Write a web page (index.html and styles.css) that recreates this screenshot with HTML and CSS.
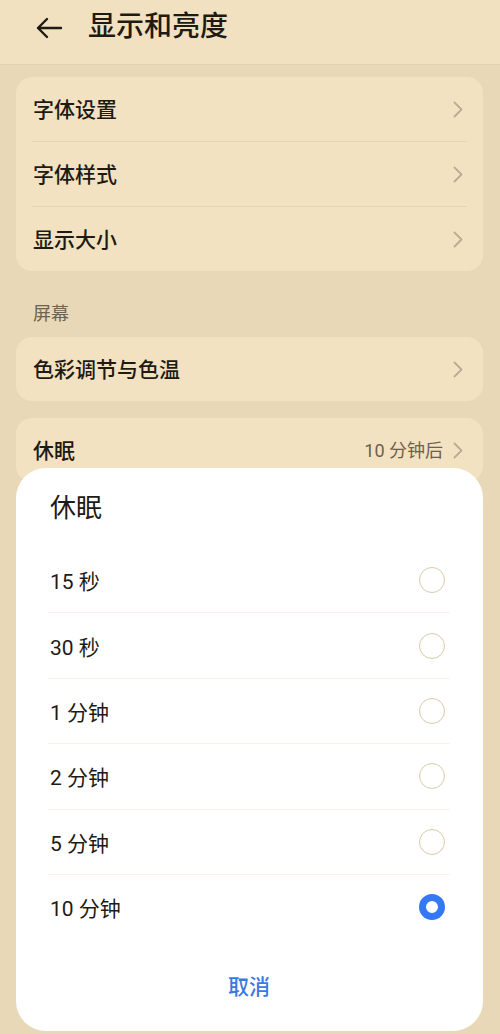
FILE: index.html
```html
<!DOCTYPE html>
<html lang="zh-CN">
<head>
    <meta charset="UTF-8">
    <meta name="viewport" content="width=device-width, initial-scale=1.0">
    <title>显示和亮度</title>
    <link rel="stylesheet" href="styles.css">
</head>
<body>
    <header class="topbar">
        <svg class="back" width="28" height="22" viewBox="0 0 28 22">
            <path d="M26 11H3M12 2L3 11L12 20" fill="none" stroke="#1e1a14" stroke-width="2.4" stroke-linecap="round" stroke-linejoin="round"/>
        </svg>
        <h1 class="title">显示和亮度</h1>
    </header>

    <main class="page">
        <div class="card">
            <div class="row"><span class="row-label">字体设置</span><svg class="chev" width="10" height="17" viewBox="0 0 10 17"><path d="M1.5 1.5L8.5 8.5L1.5 15.5"/></svg></div>
            <div class="row"><span class="row-label">字体样式</span><svg class="chev" width="10" height="17" viewBox="0 0 10 17"><path d="M1.5 1.5L8.5 8.5L1.5 15.5"/></svg></div>
            <div class="row"><span class="row-label">显示大小</span><svg class="chev" width="10" height="17" viewBox="0 0 10 17"><path d="M1.5 1.5L8.5 8.5L1.5 15.5"/></svg></div>
        </div>

        <div class="section-label">屏幕</div>

        <div class="card">
            <div class="row"><span class="row-label">色彩调节与色温</span><svg class="chev" width="10" height="17" viewBox="0 0 10 17"><path d="M1.5 1.5L8.5 8.5L1.5 15.5"/></svg></div>
        </div>

        <div class="card card-gap">
            <div class="row">
                <span class="row-label">休眠</span>
                <span class="row-value">10 分钟后</span>
                <svg class="chev" width="10" height="17" viewBox="0 0 10 17"><path d="M1.5 1.5L8.5 8.5L1.5 15.5"/></svg>
            </div>
        </div>
    </main>

    <div class="sheet">
        <h2 class="sheet-title">休眠</h2>
        <ul class="options">
            <li class="option"><span>15 秒</span><span class="radio"></span></li>
            <li class="option"><span>30 秒</span><span class="radio"></span></li>
            <li class="option"><span>1 分钟</span><span class="radio"></span></li>
            <li class="option"><span>2 分钟</span><span class="radio"></span></li>
            <li class="option"><span>5 分钟</span><span class="radio"></span></li>
            <li class="option"><span>10 分钟</span><span class="radio is-checked"></span></li>
        </ul>
        <div class="cancel">取消</div>
    </div>
</body>
</html>
```

FILE: styles.css
```css
* {
    margin: 0;
    padding: 0;
    box-sizing: border-box;
}
body {
    font-family: Roboto, "Noto Sans CJK SC", sans-serif;
    background-color: #e9d8b8;
    color: #1e1a14;
    height: 1034px;
    overflow: hidden;
}

.topbar {
    height: 65px;
    background-color: #f1e1c1;
    border-bottom: 1px solid #e2d0ae;
    display: flex;
    align-items: flex-start;
    padding: 10px 0 0 35px;
    gap: 25px;
}
.back {
    margin-top: 7px;
}
.title {
    font-size: 28px;
    font-weight: 500;
    line-height: 34px;
}

.page {
    padding: 12px 17px 0 16px;
}

.card {
    background-color: #f3e2c2;
    border-radius: 16px;
    padding: 0 16px;
}
.card-gap {
    margin-top: 17px;
}

.row {
    height: 64px;
    display: flex;
    align-items: center;
    padding: 0 0 3px 1px;
}
.row + .row {
    border-top: 1px solid #e5d3b1;
    height: 65px;
}
.row-label {
    flex: 1;
    font-size: 21px;
    font-weight: 500;
}
.row-value {
    font-size: 18px;
    color: #6c604e;
    margin-right: 10px;
}
.chev {
    margin: 3px 4px 0 0;
    fill: none;
    stroke: #b9ac94;
    stroke-width: 1.8;
    stroke-linecap: round;
    stroke-linejoin: round;
}

.section-label {
    font-size: 18px;
    line-height: 24px;
    color: #6e6250;
    padding: 31px 17px 11px;
}

.sheet {
    position: fixed;
    left: 16px;
    right: 17px;
    top: 468px;
    bottom: 3px;
    background-color: #ffffff;
    border-radius: 30px;
    padding: 24px 33px 0 32px;
    display: flex;
    flex-direction: column;
}
.sheet-title {
    font-size: 26px;
    font-weight: 400;
    line-height: 32px;
    padding-left: 2px;
    margin-bottom: 23px;
}

.options {
    list-style: none;
}
.option {
    height: 65.4px;
    display: flex;
    align-items: center;
    justify-content: space-between;
    padding: 0 5px 0 2px;
    font-size: 21px;
}
.option + .option {
    border-top: 1px solid #f7f3eb;
}

.radio {
    width: 26px;
    height: 26px;
    border-radius: 50%;
    border: 1.5px solid #d9caa9;
}
.radio.is-checked {
    border: 7.5px solid #3478f4;
}

.cancel {
    margin-top: 34px;
    text-align: center;
    font-size: 21px;
    font-weight: 500;
    line-height: 28px;
    color: #3b78e0;
}
```
